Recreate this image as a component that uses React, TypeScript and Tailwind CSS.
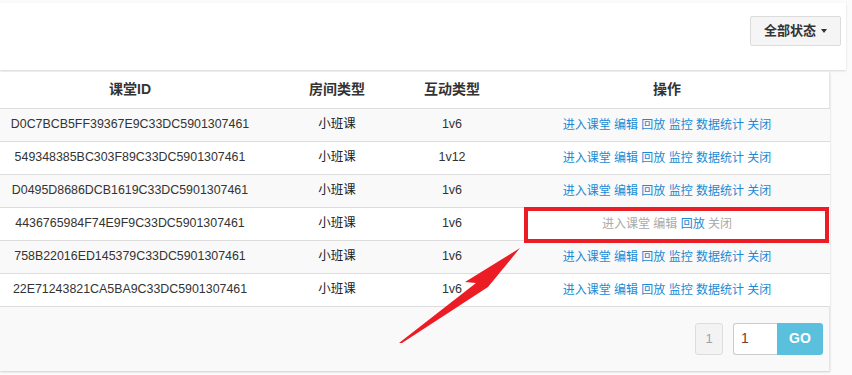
import React from 'react';

const rows = [
  { id: 'D0C7BCB5FF39367E9C33DC5901307461', type: '小班课', mode: '1v6', closed: false },
  { id: '549348385BC303F89C33DC5901307461', type: '小班课', mode: '1v12', closed: false },
  { id: 'D0495D8686DCB1619C33DC5901307461', type: '小班课', mode: '1v6', closed: false },
  { id: '4436765984F74E9F9C33DC5901307461', type: '小班课', mode: '1v6', closed: true },
  { id: '758B22016ED145379C33DC5901307461', type: '小班课', mode: '1v6', closed: false },
  { id: '22E71243821CA5BA9C33DC5901307461', type: '小班课', mode: '1v6', closed: false },
];

const actions = ['进入课堂', '编辑', '回放', '监控', '数据统计', '关闭'];

const font = { fontFamily: '"Liberation Sans", Arial, "Noto Sans CJK SC", sans-serif' };

export default function App() {
  return (
    <div className="w-[852px] h-[375px] overflow-hidden bg-[#fbfbfb] pt-[3px]" style={font}>
      {/* Top filter bar */}
      <div className="w-[846px] h-[67px] bg-white shadow-[0_1px_2px_rgba(0,0,0,0.15)] flex items-start justify-end pr-[5px] pt-[13px]">
        <button className="h-[30px] px-[13px] flex items-center gap-[5px] bg-[#f5f5f5] border border-[#dcdcdc] rounded-[2px] text-[13px] font-bold text-[#333]">
          全部状态
          <span className="w-0 h-0 border-l-[3.5px] border-r-[3.5px] border-t-[4px] border-l-transparent border-r-transparent border-t-[#333]" />
        </button>
      </div>

      {/* Table panel */}
      <div className="relative mt-[2px] w-[830px] bg-white shadow-[0_1px_2px_rgba(0,0,0,0.18)] border-r border-[#e6e6e6]">
        <table className="w-[830px] border-collapse table-fixed">
          <colgroup>
            <col className="w-[260px]" />
            <col className="w-[154px]" />
            <col className="w-[90px]" />
            <col className="w-[326px]" />
          </colgroup>
          <thead>
            <tr className="h-[36px] border-b border-[#dddddd]">
              <th className="text-[14px] font-bold text-[#333] text-center">课堂ID</th>
              <th className="text-[14px] font-bold text-[#333] text-center">房间类型</th>
              <th className="text-[14px] font-bold text-[#333] text-center pr-[14px]">互动类型</th>
              <th className="text-[14px] font-bold text-[#333] text-center">操作</th>
            </tr>
          </thead>
          <tbody>
            {rows.map((r, i) => (
              <tr key={r.id} className={`h-[33px] border-b border-[#dddddd] ${i % 2 === 0 ? 'bg-[#f9f9f9]' : 'bg-white'}`}>
                <td className="text-center text-[12.4px] text-[#333]">{r.id}</td>
                <td className="text-center text-[12.5px] text-[#222]">{r.type}</td>
                <td className="text-center text-[12.5px] text-[#333] pr-[14px]">{r.mode}</td>
                <td className="text-center text-[12px]">
                  {r.closed ? (
                    <span className="text-[#aaaaaa]">
                      进入课堂 编辑 <span className="text-[#1a8ad4]">回放</span> 关闭
                    </span>
                  ) : (
                    <span className="text-[#1a8ad4]">{actions.join(' ')}</span>
                  )}
                </td>
              </tr>
            ))}
          </tbody>
        </table>

        {/* Pagination footer */}
        <div className="h-[64px] bg-[#f9f9f9] flex items-start justify-end pt-[16px] pr-[6px]">
          <div className="w-[28px] h-[32px] mr-[10px] flex items-center justify-center bg-[#f3f3f3] border border-[#dddddd] rounded-[3px] text-[13px] text-[#9aa3b0]">
            1
          </div>
          <div className="flex h-[32px]">
            <div className="w-[44px] h-[32px] bg-white border border-[#cccccc] border-r-0 rounded-l-[3px] flex items-center pl-[7px] text-[14px] text-[#7a3a2a]">
              1
            </div>
            <div className="w-[46px] h-[32px] bg-[#5bc0de] rounded-r-[3px] flex items-center justify-center text-[14px] font-bold text-white">
              GO
            </div>
          </div>
        </div>

        {/* Highlight box */}
        <div className="absolute left-[524px] top-[135px] w-[305px] h-[36px] border-[4px] border-[#ec1c24]" />

        {/* Annotation arrow */}
        <svg className="absolute left-0 top-0 pointer-events-none" width="852" height="300" viewBox="0 0 852 300">
          <polygon
            points="399,271 476,211 465,210 520,176 488,215 402,271"
            fill="#ec1c24"
          />
        </svg>
      </div>
    </div>
  );
}
